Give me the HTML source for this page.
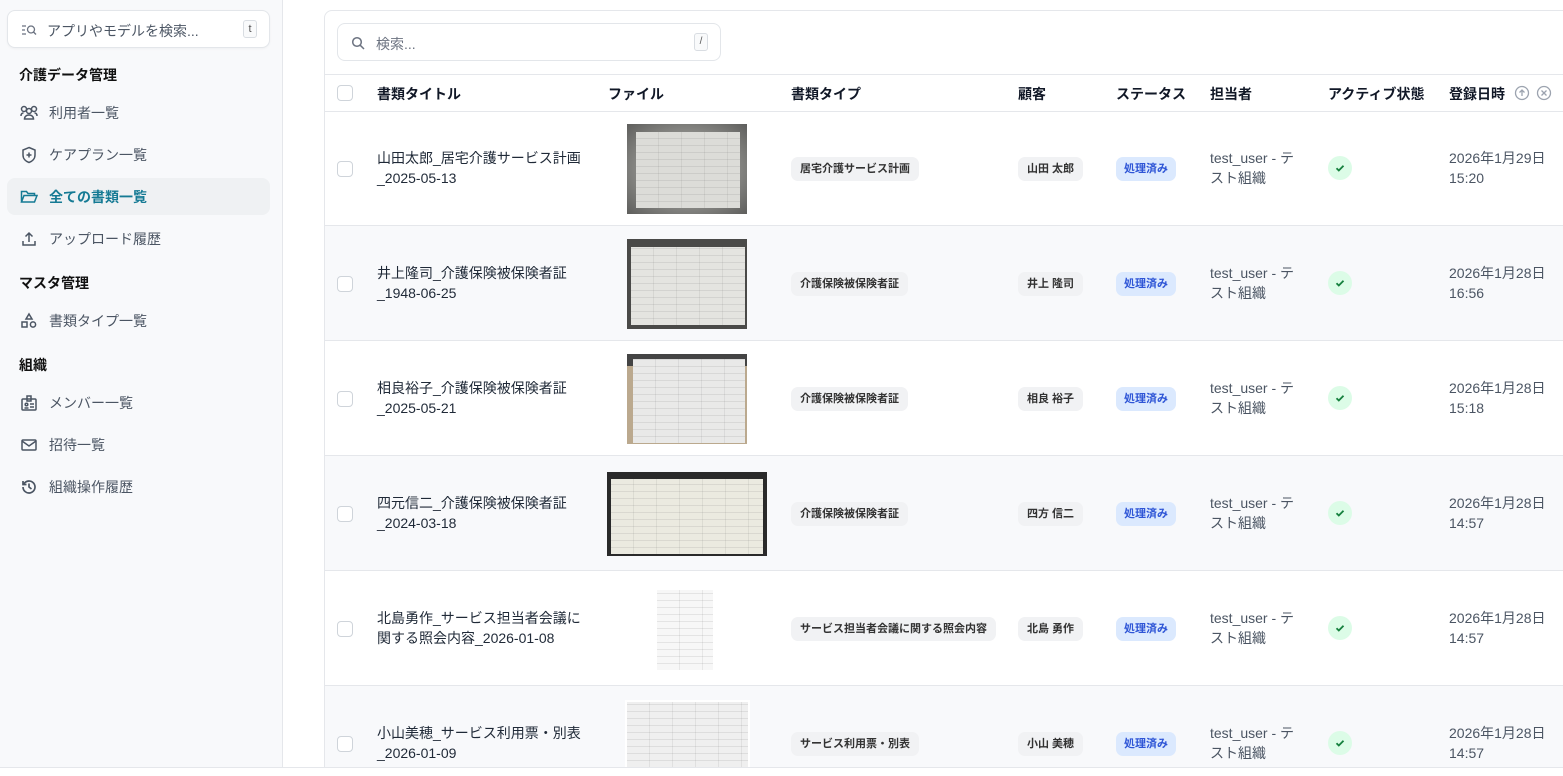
<!DOCTYPE html>
<html><head><meta charset="utf-8">
<style>
*{box-sizing:border-box;margin:0;padding:0}
html,body{width:1563px;height:776px;overflow:hidden}
body{background:#fff;font-family:"Liberation Sans","Noto Sans CJK JP",sans-serif;color:#111827;position:relative}
.wrap{position:absolute;left:0;top:0;width:1563px;height:767px;overflow:hidden}
.side{position:absolute;left:0;top:0;width:283px;height:767px;background:#f8f9fb;border-right:1px solid #e5e7eb}
.sbox{position:absolute;left:7px;top:10px;width:263px;height:38px;background:#fff;border:1px solid #e3e6ea;border-radius:8px;box-shadow:0 1px 2px rgba(0,0,0,.04)}
.sbox .t{position:absolute;left:39px;top:10px;font-size:14px;color:#4b5563}
.kbd{position:absolute;border:1px solid #d9dde2;border-radius:3px;background:#f9fafb;font-size:11px;color:#555;text-align:center}
.h{position:absolute;left:19px;font-size:14px;font-weight:bold;color:#111}
.it{position:absolute;left:7px;width:263px;height:37px;border-radius:8px;font-size:14px;color:#4b5563}
.it span{position:absolute;left:42px;top:9px}
.it svg{position:absolute;left:13px;top:10px}
.it.a{background:#eff1f3;color:#157a94;font-weight:bold}
.card{position:absolute;left:324px;top:10px;width:1260px;height:800px;border:1px solid #e5e7eb;border-radius:8px;background:#fff}
.srch{position:absolute;left:337px;top:23px;width:384px;height:38px;border:1px solid #e3e6ea;border-radius:8px;background:#fff}
.hdr{position:absolute;left:325px;top:74px;width:1240px;height:38px;border-top:1px solid #e5e7eb;border-bottom:1px solid #e5e7eb;font-size:14px;font-weight:bold}
.hdr div{position:absolute;top:9px}
.row{position:absolute;left:325px;width:1240px;height:115px;border-bottom:1px solid #e5e7eb;font-size:14px}
.row.g{background:#f8f9fb}
.cb{position:absolute;left:12px;top:50px;width:16px;height:16px;border:1px solid #cfd4da;border-radius:4px;background:#fff}
.ttl{position:absolute;left:52px;top:37px;line-height:20px;color:#1f2937}
.pill{position:absolute;top:46px;height:24px;line-height:24px;padding:0 9px;border-radius:7px;background:#f1f2f4;font-size:11px;font-weight:bold;color:#333}
.st{position:absolute;left:791px;top:46px;height:24px;line-height:24px;padding:0 8px;border-radius:7px;background:#dbe9fe;font-size:11px;font-weight:bold;color:#2e55d6}
.as{position:absolute;left:885px;top:37px;line-height:20px;color:#4b5563}
.ok{position:absolute;left:1003px;top:45px;width:24px;height:24px;border-radius:50%;background:#dcfce7}
.dt{position:absolute;left:1124px;top:37px;line-height:20px;color:#4b5563}
.th{position:absolute;overflow:hidden}
.doc{position:absolute;background:#eceeec;background-image:repeating-linear-gradient(0deg,transparent 0 6px,rgba(90,90,90,.12) 6px 7px),repeating-linear-gradient(90deg,transparent 0 22px,rgba(90,90,90,.1) 22px 23px)}
.bot{position:absolute;left:0;top:767px;width:1563px;height:1px;background:#e5e7eb}
</style></head><body>
<div class="wrap">
<div class="side">
 <div class="sbox">
  <svg style="position:absolute;left:13px;top:13px" width="16" height="12" viewBox="0 0 16 12" fill="none" stroke="#6b7280" stroke-width="1.3"><path d="M1 2h4M1 6h3M1 10h4"/><circle cx="10" cy="5.5" r="3.5"/><path d="M12.5 8l2.5 2.5"/></svg>
  <div class="t">アプリやモデルを検索...</div>
  <div class="kbd" style="left:235px;top:9px;width:14px;height:18px;line-height:16px">t</div>
 </div>
 <div class="h" style="top:65px">介護データ管理</div>
 <div class="it" style="top:94px"><svg width="18" height="18" viewBox="0 0 18 18" fill="none" stroke="#4b5563" stroke-width="1.5"><circle cx="9" cy="7" r="2.5"/><path d="M4.5 15c0-2.5 2-4 4.5-4s4.5 1.5 4.5 4z"/><circle cx="4" cy="5" r="2.5"/><circle cx="14" cy="5" r="2.5"/><path d="M1 12c0-2 1-3 2.5-3M17 12c0-2-1-3-2.5-3"/></svg><span>利用者一覧</span></div>
 <div class="it" style="top:136px"><svg width="18" height="18" viewBox="0 0 18 18" fill="none" stroke="#4b5563" stroke-width="1.5"><path d="M9 1.5l6 2.5v5c0 4-3 6.5-6 7.5-3-1-6-3.5-6-7.5V4z"/><path d="M9 6.5v5M6.5 9h5"/></svg><span>ケアプラン一覧</span></div>
 <div class="it a" style="top:178px"><svg width="18" height="18" viewBox="0 0 18 18" fill="none" stroke="#157a94" stroke-width="1.5"><path d="M1.5 14V3.5h5l1.5 2h6.5v2M1.5 14l2.5-6.5h13l-2.5 6.5z"/></svg><span>全ての書類一覧</span></div>
 <div class="it" style="top:220px"><svg width="18" height="18" viewBox="0 0 18 18" fill="none" stroke="#4b5563" stroke-width="1.5"><path d="M9 12V3M5.5 6.5L9 3l3.5 3.5M3 11v4h12v-4"/></svg><span>アップロード履歴</span></div>
 <div class="h" style="top:273px">マスタ管理</div>
 <div class="it" style="top:302px"><svg width="18" height="18" viewBox="0 0 18 18" fill="none" stroke="#4b5563" stroke-width="1.5"><path d="M9 2l3 5H6z"/><rect x="2" y="10" width="5" height="5"/><circle cx="13" cy="12.5" r="2.6"/></svg><span>書類タイプ一覧</span></div>
 <div class="h" style="top:355px">組織</div>
 <div class="it" style="top:384px"><svg width="18" height="18" viewBox="0 0 18 18" fill="none" stroke="#4b5563" stroke-width="1.5"><rect x="2" y="5" width="14" height="11" rx="1"/><rect x="7" y="2" width="4" height="5"/><circle cx="6.5" cy="10.5" r="1.3"/><path d="M10 10h4M10 13h4M4.5 14h4"/></svg><span>メンバー一覧</span></div>
 <div class="it" style="top:426px"><svg width="18" height="18" viewBox="0 0 18 18" fill="none" stroke="#4b5563" stroke-width="1.5"><rect x="2" y="4" width="14" height="10" rx="1"/><path d="M2 5l7 5 7-5"/></svg><span>招待一覧</span></div>
 <div class="it" style="top:468px"><svg width="18" height="18" viewBox="0 0 18 18" fill="none" stroke="#4b5563" stroke-width="1.7"><path d="M3 9a6 6 0 1 0 1.8-4.3L3 6.5M3 3v3.5h3.5"/><path d="M9 5.5V9l2.5 2"/></svg><span>組織操作履歴</span></div>
</div>

<div class="card"></div>
<div class="srch">
 <svg style="position:absolute;left:13px;top:12px" width="14" height="14" viewBox="0 0 14 14" fill="none" stroke="#6b7280" stroke-width="1.5"><circle cx="6" cy="6" r="4.3"/><path d="M9.3 9.3L13 13"/></svg>
 <div style="position:absolute;left:38px;top:10px;font-size:14px;color:#6b7280">検索...</div>
 <div class="kbd" style="left:356px;top:9px;width:14px;height:18px;line-height:16px;font-size:10px">/</div>
</div>
<div class="hdr">
 <div class="cb" style="top:10px"></div>
 <div style="left:52px">書類タイトル</div>
 <div style="left:283px">ファイル</div>
 <div style="left:466px">書類タイプ</div>
 <div style="left:693px">顧客</div>
 <div style="left:791px">ステータス</div>
 <div style="left:885px">担当者</div>
 <div style="left:1003px">アクティブ状態</div>
 <div style="left:1124px">登録日時</div>
 <svg style="position:absolute;left:1189px;top:10px" width="42" height="16" viewBox="0 0 42 16" fill="none" stroke="#9ca3af" stroke-width="1.3"><circle cx="8" cy="8" r="6.5"/><path d="M8 11V5M5.5 7.5L8 5l2.5 2.5"/><circle cx="30" cy="8" r="6.5"/><path d="M27.5 5.5l5 5M32.5 5.5l-5 5"/></svg>
</div>

<div class="row" style="top:111px"><div class="cb"></div><div class="ttl">山田太郎_居宅介護サービス計画<br>_2025-05-13</div>
 <div class="th" style="left:302px;top:13px;width:120px;height:90px;background:radial-gradient(ellipse at center,#9a9a96 40%,#5e5e5c 100%)"><div class="doc" style="left:9px;top:8px;width:104px;height:76px;background-color:#dcdcd8"></div></div>
 <div class="pill" style="left:466px">居宅介護サービス計画</div><div class="pill" style="left:693px">山田 太郎</div>
 <div class="st">処理済み</div><div class="as">test_user - テ<br>スト組織</div><div class="ok"><svg width="24" height="24" viewBox="0 0 24 24" fill="none" stroke="#15803d" stroke-width="1.8"><path d="M8.5 12.2l2.3 2.3 4.7-4.8"/></svg></div><div class="dt">2026年1月29日<br>15:20</div></div>

<div class="row g" style="top:226px"><div class="cb"></div><div class="ttl">井上隆司_介護保険被保険者証<br>_1948-06-25</div>
 <div class="th" style="left:302px;top:13px;width:120px;height:90px;background:#4a4a48"><div class="doc" style="left:4px;top:8px;width:114px;height:78px;background-color:#e4e4e0"></div></div>
 <div class="pill" style="left:466px">介護保険被保険者証</div><div class="pill" style="left:693px">井上 隆司</div>
 <div class="st">処理済み</div><div class="as">test_user - テ<br>スト組織</div><div class="ok"><svg width="24" height="24" viewBox="0 0 24 24" fill="none" stroke="#15803d" stroke-width="1.8"><path d="M8.5 12.2l2.3 2.3 4.7-4.8"/></svg></div><div class="dt">2026年1月28日<br>16:56</div></div>

<div class="row" style="top:341px"><div class="cb"></div><div class="ttl">相良裕子_介護保険被保険者証<br>_2025-05-21</div>
 <div class="th" style="left:302px;top:13px;width:120px;height:90px;background:#bba98e"><div style="position:absolute;left:0;top:0;width:120px;height:12px;background:#444"></div><div class="doc" style="left:6px;top:5px;width:112px;height:84px;background-color:#e9e9e8"></div></div>
 <div class="pill" style="left:466px">介護保険被保険者証</div><div class="pill" style="left:693px">相良 裕子</div>
 <div class="st">処理済み</div><div class="as">test_user - テ<br>スト組織</div><div class="ok"><svg width="24" height="24" viewBox="0 0 24 24" fill="none" stroke="#15803d" stroke-width="1.8"><path d="M8.5 12.2l2.3 2.3 4.7-4.8"/></svg></div><div class="dt">2026年1月28日<br>15:18</div></div>

<div class="row g" style="top:456px"><div class="cb"></div><div class="ttl">四元信二_介護保険被保険者証<br>_2024-03-18</div>
 <div class="th" style="left:282px;top:16px;width:160px;height:84px;background:#2a2a2a"><div class="doc" style="left:4px;top:7px;width:152px;height:75px;background-color:#ebeae0"></div></div>
 <div class="pill" style="left:466px">介護保険被保険者証</div><div class="pill" style="left:693px">四方 信二</div>
 <div class="st">処理済み</div><div class="as">test_user - テ<br>スト組織</div><div class="ok"><svg width="24" height="24" viewBox="0 0 24 24" fill="none" stroke="#15803d" stroke-width="1.8"><path d="M8.5 12.2l2.3 2.3 4.7-4.8"/></svg></div><div class="dt">2026年1月28日<br>14:57</div></div>

<div class="row" style="top:571px"><div class="cb"></div><div class="ttl">北島勇作_サービス担当者会議に<br>関する照会内容_2026-01-08</div>
 <div class="th" style="left:330px;top:13px;width:60px;height:88px;background:#fff"><div class="doc" style="left:2px;top:6px;width:56px;height:80px;background-color:#f7f7f7"></div></div>
 <div class="pill" style="left:466px">サービス担当者会議に関する照会内容</div><div class="pill" style="left:693px">北島 勇作</div>
 <div class="st">処理済み</div><div class="as">test_user - テ<br>スト組織</div><div class="ok"><svg width="24" height="24" viewBox="0 0 24 24" fill="none" stroke="#15803d" stroke-width="1.8"><path d="M8.5 12.2l2.3 2.3 4.7-4.8"/></svg></div><div class="dt">2026年1月28日<br>14:57</div></div>

<div class="row g" style="top:686px"><div class="cb"></div><div class="ttl">小山美穂_サービス利用票・別表<br>_2026-01-09</div>
 <div class="th" style="left:300px;top:14px;width:125px;height:67px;background:#fff"><div class="doc" style="left:2px;top:2px;width:121px;height:65px;background-color:#efefef"></div></div>
 <div class="pill" style="left:466px">サービス利用票・別表</div><div class="pill" style="left:693px">小山 美穂</div>
 <div class="st">処理済み</div><div class="as">test_user - テ<br>スト組織</div><div class="ok"><svg width="24" height="24" viewBox="0 0 24 24" fill="none" stroke="#15803d" stroke-width="1.8"><path d="M8.5 12.2l2.3 2.3 4.7-4.8"/></svg></div><div class="dt">2026年1月28日<br>14:57</div></div>
</div>
<div class="bot"></div>
</body></html>
